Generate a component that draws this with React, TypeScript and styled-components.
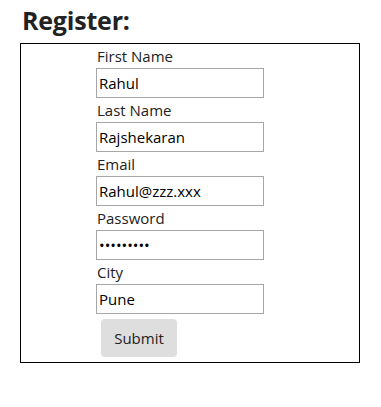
import React from "react";
import styled, { createGlobalStyle } from "styled-components";

const Global = createGlobalStyle`
  html, body { margin: 0; padding: 0; background: #fff; }
  body { font-family: "Open Sans", "Noto Sans", sans-serif; color: #212121; }
`;

const Page = styled.div`
  padding: 0 22px 0 20px;
  width: 340px;
`;

const Title = styled.h2`
  margin: 0;
  height: 43px;
  padding-left: 2px;
  font-size: 25px;
  font-weight: 700;
  line-height: 41px;
  letter-spacing: -0.2px;
  color: #222;
`;

const Box = styled.form`
  box-sizing: border-box;
  width: 340px;
  border: 1px solid #000;
  padding: 0 0 5px 75px;
  display: flex;
  flex-direction: column;
  align-items: flex-start;
`;

const Label = styled.label`
  display: block;
  height: 24px;
  line-height: 24px;
  font-size: 15px;
  padding-left: 1px;
  color: #222;
`;

const Input = styled.input`
  box-sizing: border-box;
  width: 168px;
  height: 30px;
  margin: 0;
  padding: 0 2px;
  border: 1px solid #a6a6a6;
  font-family: "Open Sans", "Noto Sans", sans-serif;
  font-size: 15px;
  color: #000;
  background: #fff;
  outline: none;
`;

const Button = styled.button`
  margin: 5px 0 0 5px;
  width: 76px;
  height: 38px;
  border: none;
  border-radius: 4px;
  background: #dedede;
  font-family: "Open Sans", "Noto Sans", sans-serif;
  font-size: 15px;
  color: #222;
  padding: 0;
`;

const fields = [
  { label: "First Name", value: "Rahul", type: "text" },
  { label: "Last Name", value: "Rajshekaran", type: "text" },
  { label: "Email", value: "Rahul@zzz.xxx", type: "text" },
  { label: "Password", value: "123456789", type: "password" },
  { label: "City", value: "Pune", type: "text" },
];

export default function App() {
  return (
    <Page>
      <Global />
      <Title>Register:</Title>
      <Box onSubmit={(e) => e.preventDefault()}>
        {fields.map((f) => (
          <React.Fragment key={f.label}>
            <Label>{f.label}</Label>
            <Input type={f.type} defaultValue={f.value} />
          </React.Fragment>
        ))}
        <Button type="submit">Submit</Button>
      </Box>
    </Page>
  );
}
